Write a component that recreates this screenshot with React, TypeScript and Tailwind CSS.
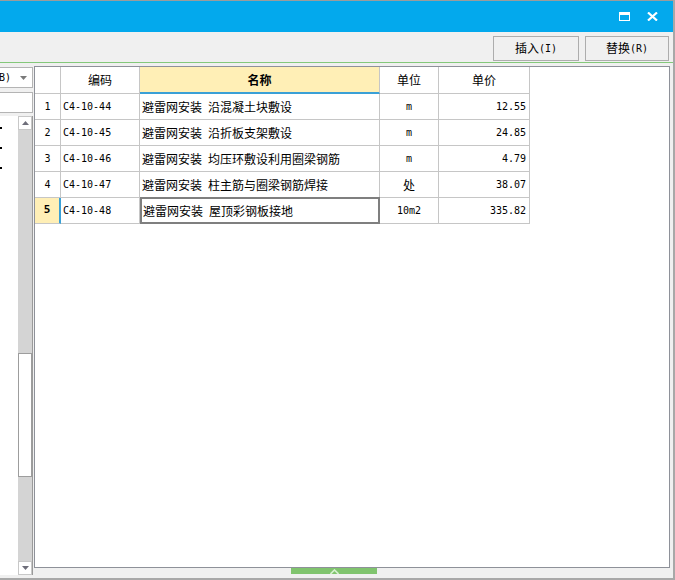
import React from "react";

type Row = { code: string; name: string; unit: string; price: string };

const rows: Row[] = [
  { code: "C4-10-44", name: "避雷网安装\u2002沿混凝土块敷设", unit: "m", price: "12.55" },
  { code: "C4-10-45", name: "避雷网安装\u2002沿折板支架敷设", unit: "m", price: "24.85" },
  { code: "C4-10-46", name: "避雷网安装\u2002均压环敷设利用圈梁钢筋", unit: "m", price: "4.79" },
  { code: "C4-10-47", name: "避雷网安装\u2002柱主筋与圈梁钢筋焊接", unit: "处", price: "38.07" },
  { code: "C4-10-48", name: "避雷网安装\u2002屋顶彩钢板接地", unit: "10m2", price: "335.82" },
];

const cell = "border-r border-b border-[#c6c6c6] flex items-center";
const mono = "font-['DejaVu_Sans_Mono',monospace] text-[10px]";

const App: React.FC = () => {
  return (
    <div className="w-[675px] h-[580px] flex flex-col bg-[#f0f0f0] border-r-2 border-[#a8a8a8] overflow-hidden text-[12px] text-black font-['Noto_Sans_CJK_SC',sans-serif]">
      <div className="h-px bg-[#9c9c9c]" />
      {/* title bar */}
      <div className="h-[31px] bg-[#03a9ed] flex items-center justify-end gap-[17px] pr-[15px]">
        <svg width="11" height="9" viewBox="0 0 11 9">
          <rect x="0.5" y="0.5" width="10" height="8" fill="none" stroke="#fff" strokeWidth="1" />
          <rect x="0" y="0" width="11" height="3" fill="#fff" />
        </svg>
        <svg width="11" height="9" viewBox="0 0 11 9">
          <path d="M1 0.5 L10 8.5 M10 0.5 L1 8.5" stroke="#fff" strokeWidth="2.2" />
        </svg>
      </div>
      {/* toolbar */}
      <div className="h-[30px] flex items-center justify-end gap-[6px] pr-[4px] pt-[2px]">
        <button className="w-[86px] h-[25px] border border-[#adadad] bg-[#f0f0f0] flex items-center justify-center">
          插入<span className={mono}>(I)</span>
        </button>
        <button className="w-[84px] h-[25px] border border-[#adadad] bg-[#f0f0f0] flex items-center justify-center">
          替换<span className={mono}>(R)</span>
        </button>
      </div>
      <div className="h-px bg-[#84c87a]" />

      <div className="flex-1 flex border-b-2 border-[#a8a8a8]">
        {/* left panel */}
        <div className="w-[33px] flex flex-col pt-[4px] pb-[3px]">
          <div className="h-[21px] bg-white border border-[#b4b4b4] border-l-0 flex items-center justify-between pr-[5px]">
            <span className={`${mono} -ml-[1px]`}>B)</span>
            <svg width="7" height="4" viewBox="0 0 7 4">
              <path d="M0 0 L7 0 L3.5 4 Z" fill="#7a7a7a" />
            </svg>
          </div>
          <div className="h-[21px] mt-[4px] bg-white border border-[#b4b4b4] border-l-0" />
          <div className="flex-1 mt-[3px] flex bg-white">
            <div className="w-[18px] flex flex-col gap-[18px] pt-[11px]">
              <div className="w-[2px] h-[2px] bg-black" />
              <div className="w-[2px] h-[2px] bg-black" />
              <div className="w-[2px] h-[2px] bg-black" />
            </div>
            <div className="w-[15px] flex flex-col bg-[#d4d4d4] border-r border-[#9a9a9a]">
              <div className="h-[14px] bg-white border border-[#c8c8c8] flex items-center justify-center">
                <svg width="7" height="4" viewBox="0 0 7 4">
                  <path d="M3.5 0 L7 4 L0 4 Z" fill="#6e6e7a" />
                </svg>
              </div>
              <div className="h-[223px]" />
              <div className="h-[124px] bg-white border border-[#9d9d9d]" />
              <div className="flex-1" />
              <div className="h-[14px] bg-white border border-[#c8c8c8] flex items-center justify-center">
                <svg width="7" height="4" viewBox="0 0 7 4">
                  <path d="M0 0 L7 0 L3.5 4 Z" fill="#6e6e7a" />
                </svg>
              </div>
            </div>
          </div>
        </div>

        {/* grid pane */}
        <div className="flex-1 flex flex-col ml-px pt-[3px] pr-[3px]">
          <div className="flex-1 bg-white border border-[#8e9199]">
            <div className="grid grid-cols-[26px_79px_240px_59px_91px] grid-rows-[27px_repeat(5,26px)] w-max">
              <div className={cell} />
              <div className={`${cell} justify-center`}>编码</div>
              <div className="border-r border-r-[#c6c6c6] border-b-2 border-b-[#3aa0d6] flex items-center justify-center bg-[#ffefb6] font-bold">
                名称
              </div>
              <div className={`${cell} justify-center`}>单位</div>
              <div className={`${cell} justify-center`}>单价</div>
              {rows.map((r, i) => {
                const sel = i === 4;
                return (
                  <React.Fragment key={r.code}>
                    {sel ? (
                      <div className="border-r-2 border-r-[#3aa0d6] border-b border-b-[#c6c6c6] flex items-center justify-center bg-[#ffefb6]">
                        <span className={`${mono} font-bold text-[11px]`}>{i + 1}</span>
                      </div>
                    ) : (
                      <div className={`${cell} justify-center`}>
                        <span className={mono}>{i + 1}</span>
                      </div>
                    )}
                    <div className={`${cell} pl-[2px]`}>
                      <span className={mono}>{r.code}</span>
                    </div>
                    {sel ? (
                      <div className="border-2 border-[#7f7f7f] -mt-px flex items-center pl-[1px]">{r.name}</div>
                    ) : (
                      <div className={`${cell} pl-[2px]`}>{r.name}</div>
                    )}
                    <div className={`${cell} justify-center`}>
                      {r.unit === "处" ? r.unit : <span className={mono}>{r.unit}</span>}
                    </div>
                    <div className={`${cell} justify-end pr-[3px]`}>
                      <span className={mono}>{r.price}</span>
                    </div>
                  </React.Fragment>
                );
              })}
            </div>
          </div>
          <div className="h-[10px] flex">
            <div className="ml-[257px] w-[86px] h-[6px] bg-[#80c46e] flex items-end justify-center">
              <svg width="9" height="5" viewBox="0 0 9 5">
                <path d="M0.5 5 L4.5 1 L8.5 5" fill="none" stroke="#d6f0cf" strokeWidth="1.6" />
              </svg>
            </div>
          </div>
        </div>
      </div>
    </div>
  );
};

export default App;
